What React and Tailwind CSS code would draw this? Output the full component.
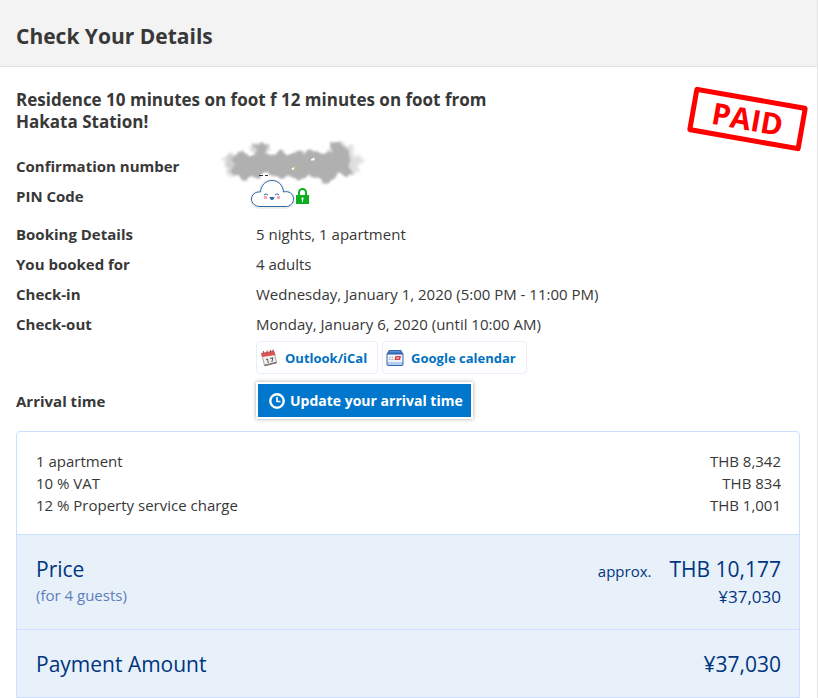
import React from "react";

const PRICE_LINES = [
  ["1 apartment", "THB 8,342"],
  ["10 % VAT", "THB 834"],
  ["12 % Property service charge", "THB 1,001"],
];

function SmokeCloud() {
  return (
    <svg className="absolute -top-4 -left-9 h-12 w-[148px]" viewBox="0 0 148 48" aria-hidden="true">
      <defs>
        <filter id="smoke-edge" x="-10%" y="-20%" width="120%" height="140%">
          <feTurbulence type="fractalNoise" baseFrequency="0.14" numOctaves="2" seed="4" />
          <feDisplacementMap in="SourceGraphic" scale="6" xChannelSelector="R" yChannelSelector="G" />
          <feGaussianBlur stdDeviation="0.8" />
        </filter>
        <filter id="smoke-wisp" x="-20%" y="-20%" width="140%" height="140%">
          <feTurbulence type="fractalNoise" baseFrequency="0.2" numOctaves="2" seed="9" />
          <feDisplacementMap in="SourceGraphic" scale="10" xChannelSelector="R" yChannelSelector="G" />
          <feGaussianBlur stdDeviation="1.4" />
        </filter>
      </defs>
      <g filter="url(#smoke-wisp)" fill="#b0b0b0">
        <path opacity="0.6" d="M3 20L10 14L18 18L16 36L6 36L9 28Z" />
        <path opacity="0.4" d="M124 6L134 8L131 14L141 18L143 24L136 26L139 34L128 36Z" />
        <path opacity="0.5" d="M30 6L40 3L50 8L46 14L34 14ZM110 5L118 3L127 6L126 14L110 14Z" />
      </g>
      <path
        filter="url(#smoke-edge)"
        fill="#b0b0b0"
        d="M14 36L10 31L15 26L10 20L17 14L24 12L27 16L33 16L38 12L32 7L39 5L48 6L45 14L55 17L61 10L65 15L73 15L77 11L85 14L90 10L100 14L112 13L111 5L120 4L125 10L130 14L131 20L129 28L133 35L128 37L120 34L113 40L108 46L100 41L90 37L79 41L70 37L62 40L53 37L45 34L38 39L32 36L24 42L19 38Z"
      />
      <path d="M91 21l3-2v2z" fill="#fff" stroke="#fff" />
      <path d="M40 36q4-3 7-1l3 3h-9z" fill="#fff" />
      <path d="M39 36.500h9" stroke="#333" strokeDasharray="4 2" />
      <path d="M71 30l3-2v3z" fill="#fff" />
      <path d="M75 27v4" stroke="#e5b565" />
    </svg>
  );
}

function HappyCloud() {
  return (
    <svg className="relative -ml-[6px] block h-[34px] w-[46px] shrink-0" viewBox="0 0 46 34" aria-hidden="true">
      <path
        d="M12 28.500H10C5 28.500 1.500 25 1.500 20.500C1.500 16 5 12.500 10.500 12.500C11 5.500 16 1.500 22 1.500C28 1.500 33 5.500 33.500 12.500C39 11.500 43.500 15.500 43.500 20.500C43.500 25 40 28.500 36 28.500Z"
        fill="none"
        stroke="#ececec"
        strokeWidth="3"
      />
      <path
        d="M12 27.500H10C5 27.500 1.500 24 1.500 20C1.500 16 5 12.500 10.500 13C11 6 16 1.500 22 1.500C28 1.500 33 6 33.500 13C39 11.500 43.500 15 43.500 20C43.500 24.500 40 27.500 36 27.500Z"
        fill="#fff"
        stroke="#2f6ba5"
      />
      <path d="M14 16q2-2.500 4 0M25 16q2-2.500 4 0" fill="none" stroke="#2f6ba5" />
      <path d="M14 17h3v3h-3zM27 17h3v3h-3z" fill="#ffa3bd" />
      <path d="M19.500 18h5q-.5 3-2.500 3T19.500 18" fill="#2f6ba5" />
    </svg>
  );
}

function Lock() {
  return (
    <svg className="block h-[17px] w-[13px]" viewBox="0 0 13 17" aria-hidden="true">
      <path d="M3 8V4.500a3.500 3.500 0 0 1 7 0V8" fill="none" stroke="#0caf20" strokeWidth="2" />
      <path d="M0 7h13v9H0z" fill="#0caf20" />
      <path d="M5.500 9.500h2v2H7v2.500H6v-2.500h-.5z" fill="#fff" />
    </svg>
  );
}

function IcalIcon() {
  return (
    <svg className="block size-[18px] shrink-0" viewBox="0 0 18 18" aria-hidden="true">
      <path d="M2 6L14.500 4L16.500 13.500L4.500 16.500Z" fill="#f1f1f0" stroke="#a9a9a7" />
      <path d="M4.500 16.500L16.500 13.500" stroke="#77706c" strokeWidth="1.5" />
      <path d="M1 4L14 1.500L15.500 6L2 8Z" fill="#d85555" />
      <path d="M3.500 2v2.500M7 1.500v2.500M10.500 1v2.500M13 0.500v2.500" stroke="#8a5c5c" />
      <path d="M6 10.500l1.500-.5l.8 4M10 9.500l3-.7l-1.200 4.200" fill="none" stroke="#555" />
    </svg>
  );
}

function GoogleIcon() {
  return (
    <svg className="block size-[18px] shrink-0" viewBox="0 0 18 18" aria-hidden="true">
      <path d="M3 1h12l2.500 4v10q0 2-2 2h-13q-2 0-2-2V5z" fill="#3465b2" />
      <path d="M3.500 2h11l1 1.500h-13z" fill="#5f8dd4" />
      <path d="M1.500 5.500h15v7.500h-15z" fill="#f1f4fa" />
      <path d="M1.500 13h15v2q0 1-1 1h-13q-1 0-1-1z" fill="#b4cdf0" />
      <path d="M3 8.500h1.500M5.500 8.500H7M3 10.500h1.500M5.500 10.500H7" stroke="#a3aebd" />
      <path d="M9.500 7h5.500l-1 4H8.500z" fill="#d6424b" />
      <path d="M10.500 9h2.500" stroke="#fff" />
    </svg>
  );
}

function ClockIcon() {
  return (
    <svg className="block size-4 shrink-0" viewBox="0 0 16 16" fill="none" stroke="#fff" aria-hidden="true">
      <circle cx="8" cy="8" r="6.7" strokeWidth="2.4" />
      <path d="M8 4v4.500h3.500" strokeWidth="1.6" />
    </svg>
  );
}

function Detail({ label, children }) {
  return (
    <div className="grid min-h-[30px] grid-cols-[240px_1fr] items-center">
      <dt className="font-bold">{label}</dt>
      <dd className="relative">{children}</dd>
    </div>
  );
}

function CalendarButton({ icon, children }) {
  return (
    <button
      type="button"
      className="flex h-[33px] items-center gap-[7px] rounded border border-[#e8f0fa] bg-white pr-[10px] pl-[3px] text-[13px] font-bold text-[#0071c2]"
    >
      {icon}
      {children}
    </button>
  );
}

export default function App() {
  return (
    <div className="min-h-screen border-r border-[#e6e6e6] bg-white font-['Open_Sans','Noto_Sans',sans-serif] text-[15px] leading-[22px] text-[#383838]">
      <header className="border-b border-[#e2e2e2] bg-[#f3f3f3] px-4 pt-[23px] pb-[17px]">
        <h1 className="text-[21px] leading-[26px] font-bold">Check Your Details</h1>
      </header>
      <main className="pt-5 pr-[17px] pl-4">
        <div className="flex min-h-16 items-start justify-between">
          <h2 className="max-w-[500px] pt-[2px] text-[17px] leading-[22px] font-bold">
            Residence 10 minutes on foot f 12 minutes on foot from Hakata Station!
          </h2>
          <div className="mt-[9px] -mr-[5px] flex h-[46px] w-[115px] rotate-10 items-center justify-center rounded-[3px] border-[5px] border-[#fe0000] text-[30px] leading-8 font-bold text-[#fe0000]">
            PAID
          </div>
        </div>

        <dl>
          <Detail label="Confirmation number">
            <div className="h-[22px]">
              <SmokeCloud />
            </div>
          </Detail>
          <Detail label="PIN Code">
            <div className="flex h-[30px] items-center">
              <HappyCloud />
              <Lock />
            </div>
          </Detail>
        </dl>
        <dl className="mt-2">
          <Detail label="Booking Details">5 nights, 1 apartment</Detail>
          <Detail label="You booked for">4 adults</Detail>
          <Detail label="Check-in">Wednesday, January 1, 2020 (5:00 PM - 11:00 PM)</Detail>
          <Detail label="Check-out">Monday, January 6, 2020 (until 10:00 AM)</Detail>
        </dl>
        <div className="mt-[2px] flex gap-1 pl-[240px]">
          <CalendarButton icon={<IcalIcon />}>Outlook/iCal</CalendarButton>
          <CalendarButton icon={<GoogleIcon />}>Google calendar</CalendarButton>
        </div>
        <dl className="mt-2">
          <Detail label="Arrival time">
            <button
              type="button"
              className="flex h-[37px] items-center gap-[5px] border-2 border-white bg-[#0077cc] bg-clip-padding pr-2 pl-[11px] text-[14px] font-bold text-white shadow-[0_0_4px_rgba(0,0,0,0.35)]"
            >
              <ClockIcon />
              Update your arrival time
            </button>
          </Detail>
        </dl>

        <section className="mt-3 rounded-t border border-[#cce1ff]">
          <div className="py-[18px] pr-[18px] pl-[19px]">
            <table className="w-full">
              <tbody>
                {PRICE_LINES.map(([name, amount]) => (
                  <tr key={name}>
                    <th scope="row" className="p-0 text-left font-normal">{name}</th>
                    <td className="p-0 text-right">{amount}</td>
                  </tr>
                ))}
              </tbody>
            </table>
          </div>
          <div className="flex justify-between border-t border-[#cce1ff] bg-[#e8f0fa] pt-5 pr-[18px] pb-[18px] pl-[19px] text-[#003580]">
            <div>
              <div className="text-[21px] leading-7">Price</div>
              <div className="text-[15px] leading-6 text-[#5c7ebc]">(for 4 guests)</div>
            </div>
            <div className="text-right">
              <div className="flex h-7 items-baseline gap-[18px]">
                <span className="leading-6">approx.</span>
                <span className="text-[21px] leading-7">THB 10,177</span>
              </div>
              <div className="text-[17px] leading-7">¥37,030</div>
            </div>
          </div>
          <div className="flex justify-between border-t border-[#cce1ff] bg-[#e8f0fa] pt-5 pr-[18px] pb-[19px] pl-[19px] text-[21px] leading-7 text-[#003580]">
            <span>Payment Amount</span>
            <span>¥37,030</span>
          </div>
        </section>
      </main>
    </div>
  );
}
